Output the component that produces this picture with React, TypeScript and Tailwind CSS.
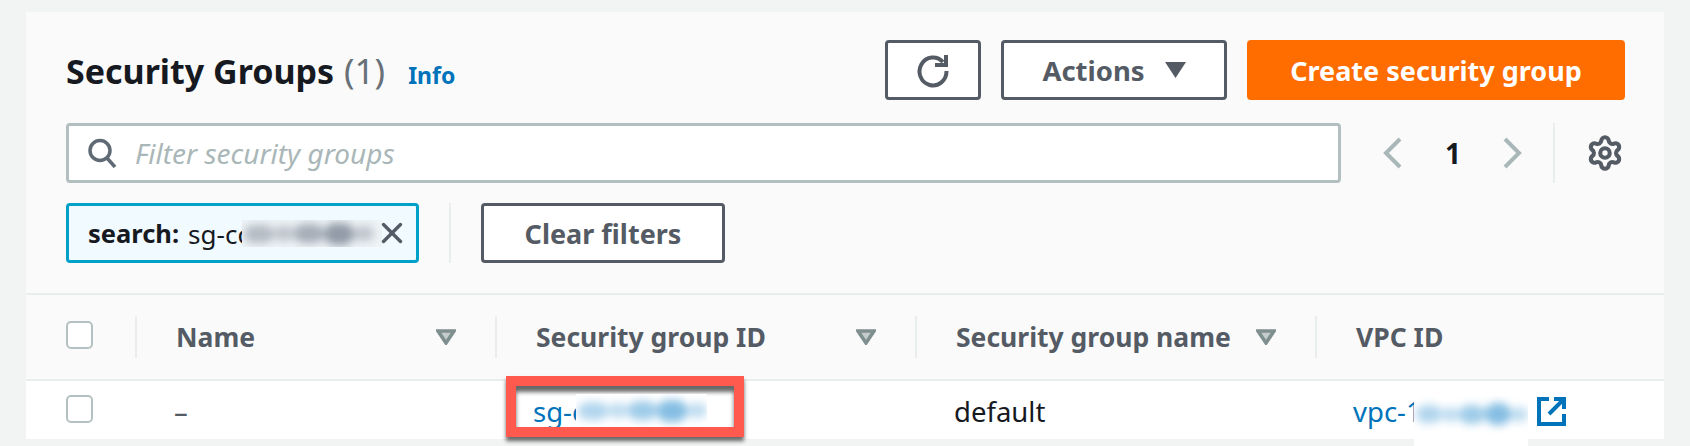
import React from 'react';
import { Settings, X } from 'lucide-react';

const SortIcon = () => (
  <svg width="20" height="16" viewBox="0 0 20 16" className="shrink-0">
    <path d="M2 2h16l-8 12z" fill="#c4cccc" stroke="#7f8f8f" strokeWidth="3.5" strokeLinejoin="miter" />
  </svg>
);

const Checkbox = () => (
  <div className="w-[27px] h-[28px] rounded-[5px] border-[2.5px] border-[#b5c0c1] bg-white" />
);

const HeaderCell = ({ label, gap }: { label: string; gap?: boolean }) => (
  <div className={`h-[42px] border-l-2 border-[#eaeded] flex items-center pl-[39px] pr-[39px] ${gap ? '' : 'justify-between'}`}>
    <span className="pt-[1px] text-[26.5px] font-bold text-[#545b64] leading-none">{label}</span>
    {gap !== undefined && <SortIcon />}
  </div>
);

// smeared out part of an id, several soft blobs side by side
const Smear = ({ color }: { color: string }) => (
  <div className={`flex items-center h-full pl-[2px] blur-[4px] ${color}`}>
    <div className="w-[30px] h-[18px] rounded-full bg-current opacity-60" />
    <div className="w-[20px] h-[15px] rounded-full bg-current opacity-50" />
    <div className="w-[30px] h-[19px] rounded-full bg-current opacity-75" />
    <div className="w-[30px] h-[22px] rounded-full bg-current opacity-95" />
    <div className="w-[20px] h-[15px] rounded-full bg-current opacity-50" />
  </div>
);

const App: React.FC = () => {
  return (
    <div className="w-[1690px] h-[446px] overflow-hidden bg-[#f2f3f3] pt-[12px] pl-[26px] font-['Noto_Sans',sans-serif]">
      <div className="relative w-[1638px] h-[427px] bg-[#fafafa]">
        {/* Header */}
        <div className="pt-[28px] pl-[40px] pr-[39px] flex items-center justify-between">
          <div className="flex items-baseline">
            <h1 className="text-[34px] font-bold text-[#16191f] leading-none">Security Groups</h1>
            <span className="ml-[10px] text-[35px] text-[#687078] leading-none">(1)</span>
            <a className="ml-[23px] text-[23px] font-bold text-[#0073bb] leading-none">Info</a>
          </div>
          <div className="flex gap-[20px]">
            <button className="w-[96px] h-[60px] rounded-[4px] border-[3px] border-[#545b64] bg-white flex items-center justify-center">
              <svg width="34" height="36" viewBox="0 0 34 36" fill="none">
                <path d="M27 10A13.5 14 0 1 0 30.500 19" stroke="#545b64" strokeWidth="4" />
                <path d="M30 3v10H19" stroke="#545b64" strokeWidth="4" />
              </svg>
            </button>
            <button className="w-[226px] h-[60px] rounded-[4px] border-[3px] border-[#545b64] bg-white flex items-center justify-center gap-[20px]">
              <span className="pt-[1px] text-[27.500px] font-bold text-[#545b64] leading-none">Actions</span>
              <svg width="21" height="16" viewBox="0 0 21 16">
                <path d="M0 0h21L10.500 16z" fill="#545b64" />
              </svg>
            </button>
            <button className="w-[378px] h-[60px] rounded-[4px] bg-[#ff6d00] flex items-center justify-center">
              <span className="text-[27px] font-bold text-white leading-none">Create security group</span>
            </button>
          </div>
        </div>

        {/* Filter */}
        <div className="mt-[23px] pl-[40px] pr-[40px] flex items-center">
          <div className="flex-1 h-[60px] rounded-[4px] border-[3px] border-[#b2bebf] bg-white flex items-center pl-[19px]">
            <svg width="29" height="30" viewBox="0 0 29 30" fill="none">
              <circle cx="12" cy="12.500" r="10" stroke="#5f6a75" strokeWidth="3.500" />
              <path d="M19 20L27 29" stroke="#5f6a75" strokeWidth="3.500" />
            </svg>
            <span className="ml-[18px] text-[28px] italic text-[#aab7b8] leading-none">Filter security groups</span>
          </div>
          <div className="w-[283px] h-[60px] flex items-center">
            <svg className="ml-[42px] shrink-0" width="19" height="32" viewBox="0 0 19 32" fill="none">
              <path d="M17 2L3 16l14 14" stroke="#aab7b8" strokeWidth="4" />
            </svg>
            <span className="ml-[43px] w-[12px] text-[28px] font-bold text-[#16191f] leading-none">1</span>
            <svg className="ml-[46px] shrink-0" width="19" height="32" viewBox="0 0 19 32" fill="none">
              <path d="M2 2l14 14L2 30" stroke="#aab7b8" strokeWidth="4" />
            </svg>
            <div className="ml-[31px] w-[2px] h-[60px] bg-[#eaeded]" />
            <Settings className="ml-[31px] shrink-0 text-[#545b64]" size={38} strokeWidth={2.6} />
          </div>
        </div>

        {/* Applied filters */}
        <div className="mt-[20px] pl-[40px] flex items-center">
          <div className="relative w-[353px] h-[60px] rounded-[4px] border-[3px] border-[#00a1c9] bg-[#f1faff] flex items-center pl-[19px]">
            <span className="pt-[1px] text-[25.500px] font-bold text-[#16191f] leading-none">search:</span>
            <span className="pt-[1px] ml-[9px] text-[26px] text-[#16191f] leading-none">sg-cc</span>
            <div className="absolute left-[173px] top-[14px] w-[140px] h-[27px] bg-[#eef3f6] overflow-hidden">
              <Smear color="text-[#8d97a3]" />
            </div>
            <X className="absolute left-[306px] top-[10px] text-[#545b64]" size={34} strokeWidth={2.4} />
          </div>
          <div className="ml-[30px] w-[2px] h-[60px] bg-[#eaeded]" />
          <button className="ml-[30px] w-[244px] h-[60px] rounded-[4px] border-[3px] border-[#545b64] bg-white flex items-center justify-center">
            <span className="pt-[1px] text-[27px] font-bold text-[#545b64] leading-none">Clear filters</span>
          </button>
        </div>

        {/* Table */}
        <div className="mt-[30px] border-t-[2px] border-[#eaeded]">
          <div className="h-[84px] grid grid-cols-[109px_360px_420px_400px_1fr] items-center">
            <div className="pl-[40px] pb-[5px]"><Checkbox /></div>
            <HeaderCell label="Name" gap={false} />
            <HeaderCell label="Security group ID" gap={false} />
            <HeaderCell label="Security group name" gap={false} />
            <HeaderCell label="VPC ID" />
          </div>
          <div className="h-[60px] border-t-[2px] border-[#eaeded] bg-white grid grid-cols-[109px_360px_420px_400px_1fr] items-center text-[27.500px] leading-none">
            <div className="pl-[40px] pb-[3px]"><Checkbox /></div>
            <div className="pl-[39px] pt-[3px] text-[#545b64]">–</div>
            <div className="pl-[38px] pt-[3px] text-[#0073bb]">sg-cc</div>
            <div className="pl-[39px] pt-[3px] text-[#16191f]">default</div>
            <div className="pl-[38px] pt-[3px] text-[#0073bb]">vpc-1</div>
          </div>
        </div>

        {/* Redacted VPC ID and external link */}
        <div className="absolute left-[1388px] top-[384px] w-[114px] h-[50px] bg-white overflow-hidden">
          <div className="h-[36px]"><Smear color="text-[#7fbbe2]" /></div>
        </div>
        <svg className="absolute left-[1511px] top-[385px]" width="29" height="29" viewBox="0 0 29 29" fill="none">
          <path d="M12 2H2v25h25V17" stroke="#0073bb" strokeWidth="4" />
          <path d="M17 2h10v10M27 2L12 17" stroke="#0073bb" strokeWidth="4" />
        </svg>

        {/* Highlight round the security group ID */}
        <div className="absolute left-[480px] top-[364px] w-[238px] h-[61px] border-[10px] border-[#ff5a4d] shadow-[0_4px_4px_rgba(0,0,0,0.6),inset_0_6px_4px_rgba(0,0,0,0.6)]">
          <div className="absolute left-[60px] top-[8px] w-[131px] h-[33px] bg-white overflow-hidden">
            <Smear color="text-[#7fbbe2]" />
          </div>
        </div>
      </div>
    </div>
  );
};

export default App;
